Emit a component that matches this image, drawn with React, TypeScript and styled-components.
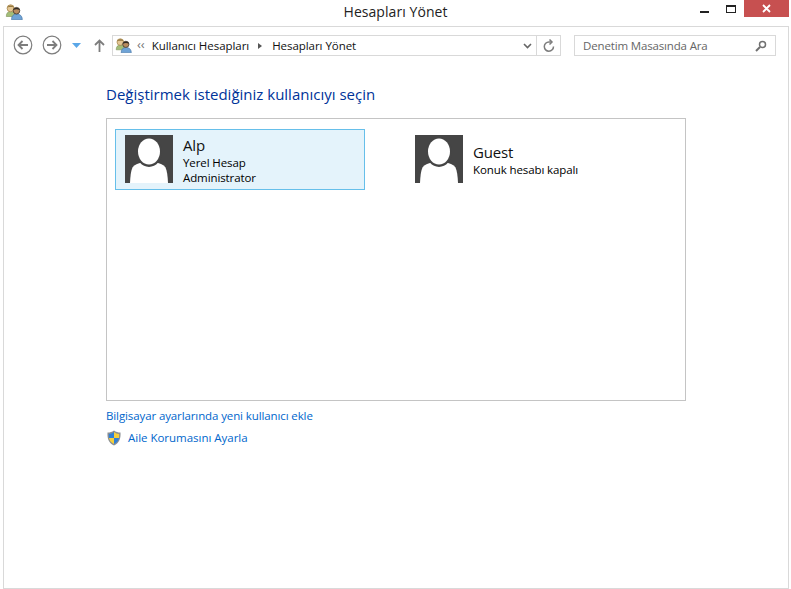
import React from "react";
import styled, { createGlobalStyle } from "styled-components";

const Global = createGlobalStyle`
  html, body { margin: 0; padding: 0; background: #fff; overflow: hidden; }
  * { box-sizing: border-box; }
`;
const font = `"Open Sans", "Noto Sans", "Liberation Sans", sans-serif`;

const Win = styled.div`
  width: 791px; height: 589px; background: #fff; display: flex; flex-direction: column;
  font-family: ${font}; padding: 0 2px 0 3px;
`;
const TitleBar = styled.header`
  height: 26px; margin-left: -3px; margin-right: -2px; position: relative; display: flex; justify-content: center;
`;
const TitleIcon = styled.div` position: absolute; left: 5px; top: 3px; width: 18px; height: 16px; `;
const Title = styled.h1`
  margin: 0; font-weight: 400; font-size: 14px; line-height: 24px; color: #222; letter-spacing: 0.06px;
`;
const Controls = styled.div` position: absolute; right: 2px; top: 0; display: flex; align-items: flex-start; `;
const Ctl = styled.div<{ $w: number }>`
  width: ${p => p.$w}px; height: 17px; display: flex; align-items: center; justify-content: center;
`;
const CloseBtn = styled(Ctl)` background: #c75050; `;
const Pane = styled.main`
  flex: 1; border: 1px solid #d9d9d9; height: 563px; display: flex; flex-direction: column;
`;
const NavBar = styled.nav`
  height: 33px; padding-top: 8px; padding-left: 9px; display: flex; align-items: flex-start;
`;
const NavBtn = styled.div<{ $w: number }>`
  width: ${p => p.$w}px; height: 20px; display: flex; align-items: center; justify-content: flex-start;
`;
const Address = styled.div`
  width: 449px; height: 21px; border: 1px solid #d9d9d9; display: flex; align-items: center; padding-left: 2px;
`;
const Crumbs = styled.div`
  flex: 1; display: flex; align-items: center; font-size: 11.5px; color: #111; letter-spacing: -0.05px;
`;
const Chevrons = styled.span` color: #777; font-size: 13px; line-height: 13px; margin: -2px 7px 0 5px; `;
const Sep = styled.span`
  width: 0; height: 0; border-left: 4px solid #555; border-top: 3.5px solid transparent; border-bottom: 3.5px solid transparent;
  margin: 0 10px 0 9px;
`;
const AddrBtn = styled.div<{ $w: number; $line?: boolean }>`
  width: ${p => p.$w}px; height: 100%; display: flex; align-items: center; justify-content: center;
  ${p => p.$line ? "border-left: 1px solid #d9d9d9;" : ""}
`;
const Search = styled.div`
  width: 202px; height: 21px; margin-left: 13px; border: 1px solid #d9d9d9; display: flex; align-items: center;
  justify-content: space-between; padding: 0 8px 0 8px; font-size: 11.5px; color: #666; letter-spacing: -0.15px;
`;
const Content = styled.section`
  padding: 24px 0 0 102px; display: flex; flex-direction: column; align-items: flex-start;
`;
const Heading = styled.h2`
  margin: 0; font-weight: 400; font-size: 15px; line-height: 20px; color: #003399;
`;
const AccountBox = styled.div`
  width: 580px; height: 283px; margin-top: 14px; border: 1px solid #c4c4c4; padding: 10px 8px;
  display: grid; grid-template-columns: 250px 250px; column-gap: 40px; align-content: start;
`;
const Account = styled.div<{ $selected?: boolean }>`
  height: 61px; padding: 5px 9px; border: 1px solid ${p => p.$selected ? "#66bfea" : "transparent"};
  background: ${p => p.$selected ? "#e4f3fb" : "transparent"};
  display: flex; align-items: flex-start; gap: 10px;
`;
const Avatar = styled.svg` width: 48px; height: 48px; flex: none; display: block; `;
const Info = styled.div` height: 48px; padding-top: 2px; display: flex; flex-direction: column; justify-content: center; `;
const Name = styled.div` font-size: 15px; line-height: 19px; color: #111; letter-spacing: -0.15px; `;
const Meta = styled.div` font-size: 11.5px; line-height: 15px; color: #000; letter-spacing: -0.1px; `;
const FirstLink = styled.a`
  margin-top: 7px; font-size: 11.5px; line-height: 16px; color: #0066cc; letter-spacing: -0.11px; text-decoration: none;
`;
const ShieldLink = styled(FirstLink)`
  margin-top: 6px; display: flex; align-items: center; gap: 6px; height: 16px; letter-spacing: -0.02px;
`;

const Users = ({ size = 18 }: { size?: number }) => (
  <svg width={size} height={size * 16 / 18} viewBox="0 0 18 16">
    <path d="M1.300 12.500c0-3.500 1.500-5 4.500-5s4.700 1.500 4.700 5z" fill="#a3bd78" stroke="#7b8f55" strokeWidth=".6" />
    <circle cx="5.600" cy="4.300" r="3.500" fill="#e4c795" stroke="#a8894f" strokeWidth=".8" />
    <path d="M2.300 3.400C3.400 .8 7.800.6 9 3.500 7 2.700 4.500 2.900 2.300 3.400z" fill="#94773f" />
    <path d="M6.500 15.700c0-4 2.200-5.700 5.200-5.700s5.600 1.700 5.600 5.700z" fill="#6fa3d6" stroke="#41709f" strokeWidth=".6" />
    <circle cx="11.500" cy="6.700" r="3.300" fill="#b98c5e" stroke="#3f342a" strokeWidth=".8" />
    <path d="M8.200 6C9 3 14 2.800 14.800 6 12.700 5 10.500 5 8.200 6z" fill="#2e2a26" />
  </svg>
);
const NavCircle = ({ dir }: { dir: "l" | "r" }) => (
  <svg width="20" height="20" viewBox="0 0 20 20" fill="none" stroke="#7d7d7d">
    <circle cx="10" cy="10" r="8.800" strokeWidth="1.200" />
    <path d={dir === "l" ? "M15 10H5.500M9.500 6l-4 4 4 4" : "M5 10h9.500M10.500 6l4 4-4 4"} strokeWidth="1.800" />
  </svg>
);
const Person = () => (
  <Avatar viewBox="0 0 48 48">
    <rect width="48" height="48" fill="#454545" />
    <path d="M5 48C5.300 41 6 35.500 7.500 32.500 9.500 29.500 13 28.500 17 27.500h14c4 1 7.500 2 9.500 5C42 35.500 42.700 41 43 48z" fill="#fff" />
    <ellipse cx="24" cy="17" rx="13" ry="15" fill="#454545" />
    <ellipse cx="24" cy="16.500" rx="11" ry="13" fill="#fff" />
  </Avatar>
);

export default function App() {
  return (
    <Win>
      <Global />
      <TitleBar>
        <TitleIcon><Users /></TitleIcon>
        <Title>Hesapları Yönet</Title>
        <Controls>
          <Ctl $w={27}>
            <svg width="9" height="10" viewBox="0 0 9 10"><rect y="7" width="9" height="2" fill="#222" /></svg>
          </Ctl>
          <Ctl $w={26}>
            <svg width="10" height="8" viewBox="0 0 10 8"><rect x=".5" y=".5" width="9" height="7" fill="none" stroke="#222" /><rect width="10" height="2" fill="#222" /></svg>
          </Ctl>
          <CloseBtn $w={45}>
            <svg width="9" height="9" viewBox="0 0 9 9"><path d="M1 1l7 7M8 1L1 8" stroke="#fff" strokeWidth="1.800" /></svg>
          </CloseBtn>
        </Controls>
      </TitleBar>
      <Pane>
        <NavBar>
          <NavBtn $w={29}><NavCircle dir="l" /></NavBtn>
          <NavBtn $w={30}><NavCircle dir="r" /></NavBtn>
          <NavBtn $w={22}>
            <svg width="9" height="5" viewBox="0 0 9 5"><path d="M0 0h9L4.500 5z" fill="#5aa7e8" /></svg>
          </NavBtn>
          <NavBtn $w={18}>
            <svg width="11" height="13" viewBox="0 0 11 13" fill="none" stroke="#7d7d7d" strokeWidth="1.800"><path d="M5.500 13V1.500M1 6l4.500-4.500L10 6" /></svg>
          </NavBtn>
          <Address>
            <Users size={17} />
            <Crumbs>
              <Chevrons>‹‹</Chevrons>Kullanıcı Hesapları<Sep />Hesapları Yönet
            </Crumbs>
            <AddrBtn $w={17}>
              <svg width="9" height="6" viewBox="0 0 9 6" fill="none" stroke="#666" strokeWidth="1.600"><path d="M1 1l3.500 3.500L8 1" /></svg>
            </AddrBtn>
            <AddrBtn $w={24} $line>
              <svg width="12" height="13" viewBox="0 0 12 13" fill="none" stroke="#7d7d7d" strokeWidth="1.500"><path d="M10.500 7.500A4.600 4.600 0 1 1 6 3h2" /><path d="M6.500 .5L9 3 6.500 5.500" /></svg>
            </AddrBtn>
          </Address>
          <Search>
            Denetim Masasında Ara
            <svg width="12" height="12" viewBox="0 0 12 12" fill="none" stroke="#707070"><circle cx="7.500" cy="4.500" r="3" strokeWidth="1.500" /><path d="M5 7l-4 4" strokeWidth="2" /></svg>
          </Search>
        </NavBar>
        <Content>
          <Heading>Değiştirmek istediğiniz kullanıcıyı seçin</Heading>
          <AccountBox>
            <Account $selected>
              <Person />
              <Info>
                <Name>Alp</Name>
                <Meta>Yerel Hesap</Meta>
                <Meta>Administrator</Meta>
              </Info>
            </Account>
            <Account>
              <Person />
              <Info>
                <Name>Guest</Name>
                <Meta>Konuk hesabı kapalı</Meta>
              </Info>
            </Account>
          </AccountBox>
          <FirstLink>Bilgisayar ayarlarında yeni kullanıcı ekle</FirstLink>
          <ShieldLink>
            <svg width="16" height="16" viewBox="0 0 16 16">
              <path d="M8 .5C10 2 12 2.500 14.500 2.500c.3 6-1 10.500-6.500 13C2.500 13 1.200 8.500 1.500 2.500 4 2.500 6 2 8 .5z" fill="#8a8f94" />
              <path d="M8 2v6H3c-.1-1.500-.1-3-.1-4C5 3.900 6.500 3.200 8 2z" fill="#2f7fd6" />
              <path d="M8 2c1.500 1.200 3 1.900 5.100 2 0 1 0 2.500-.1 4H8z" fill="#f5cf3c" />
              <path d="M3 8h5v6C5 12.500 3.500 10.500 3 8z" fill="#f5cf3c" />
              <path d="M8 8h5c-.5 2.500-2 4.500-5 6z" fill="#2f7fd6" />
            </svg>
            Aile Korumasını Ayarla
          </ShieldLink>
        </Content>
      </Pane>
    </Win>
  );
}
